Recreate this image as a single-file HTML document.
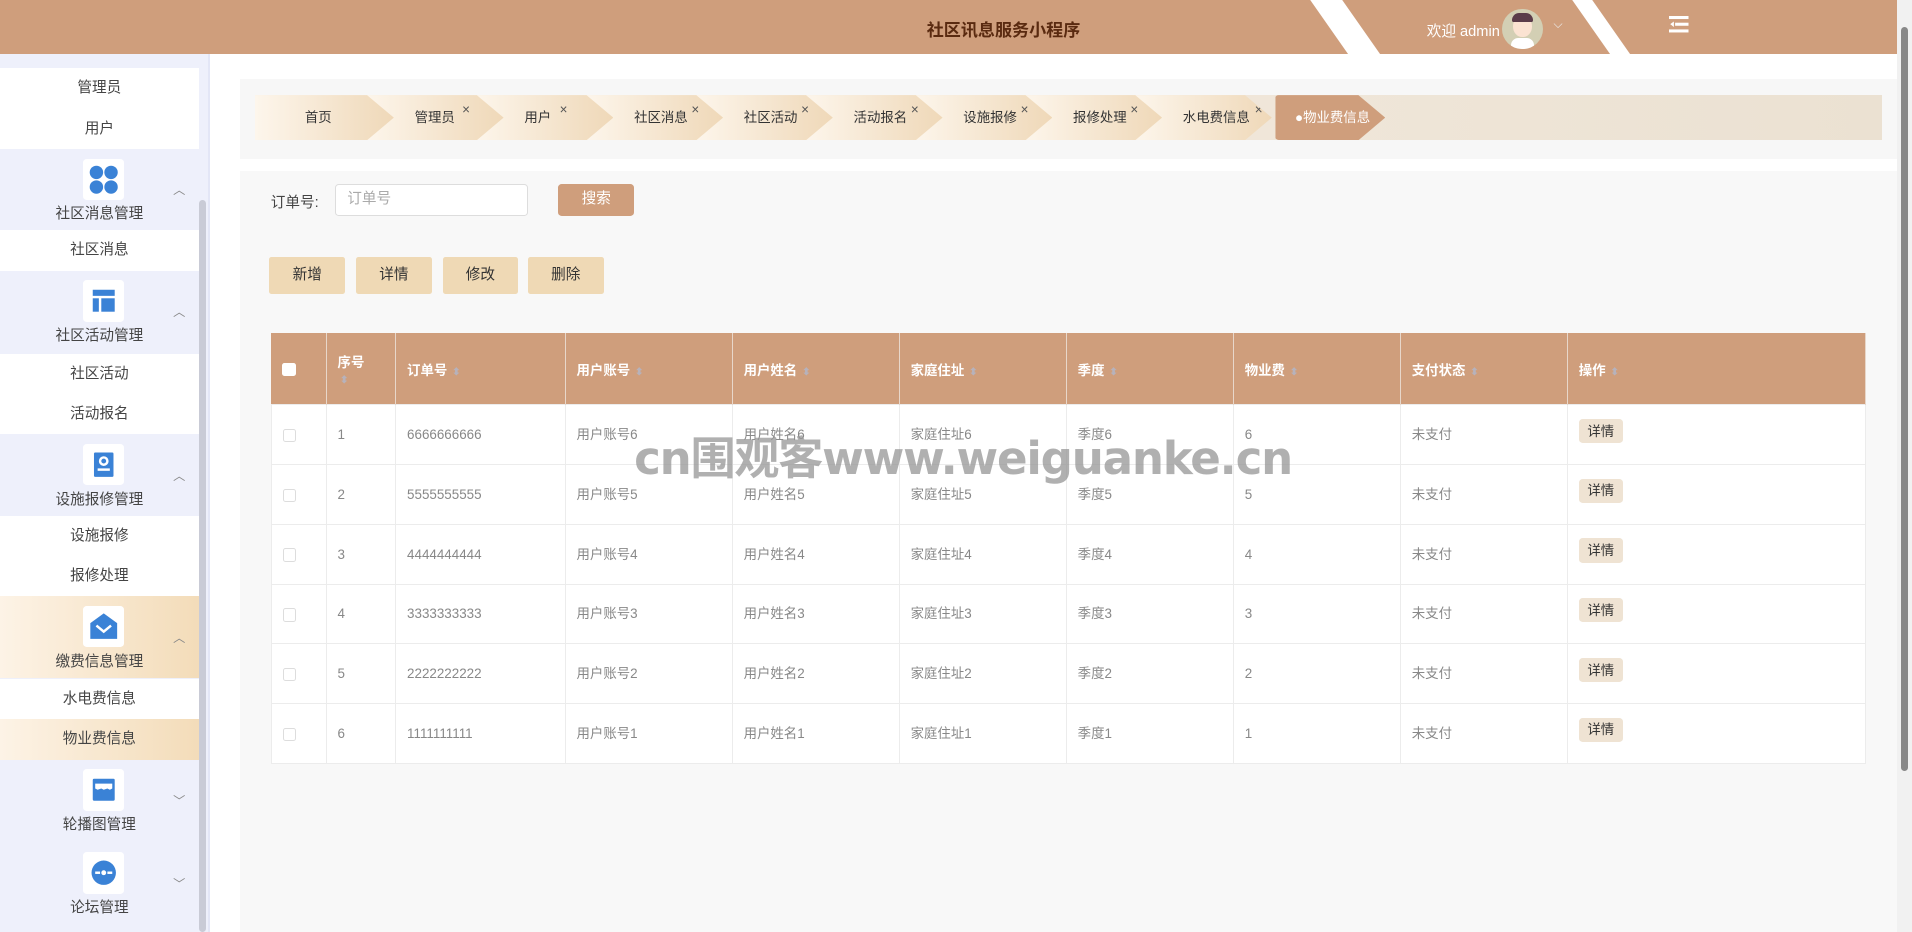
<!DOCTYPE html>
<html><head><meta charset="utf-8"><style>
*{margin:0;padding:0;box-sizing:border-box}
html,body{width:1912px;height:932px;overflow:hidden;background:#fff}
body{font-family:"Liberation Sans","Noto Sans CJK SC",sans-serif;}
#root{zoom:1.2194;width:1568px;height:764px;position:relative;overflow:hidden;font-size:12px;color:#333}
.hdr{position:absolute;left:0;top:0;width:1556px;height:44px;background:#cf9e7c;overflow:hidden}
.hdr .t{position:absolute;left:760px;top:13px;font-size:14px;font-weight:bold;color:#5a2a10}
.stripe{position:absolute;top:0;height:44px;background:#fff;transform:skewX(35deg)}
.sb{position:absolute;left:0;top:44px;width:172px;height:720px;background:#eef0fb;border-right:2px solid #e3e6f6}
.sbs{position:absolute;left:163px;top:120px;width:6px;height:600px;background:#c9cbd6;border-radius:3px}
.it{position:absolute;left:0;width:163px;height:33px;line-height:33px;text-align:center;background:#fff;color:#444;font-size:12px}
.grp{position:absolute;left:0;width:163px;height:67px;text-align:center;color:#444}
.grp .ic{position:absolute;left:68px;top:8px;width:34px;height:34px;background:#fff;border-radius:3px}
.grp .lb{position:absolute;left:0;width:163px;top:44px;font-size:12px}
.grp .ch{position:absolute;left:142px;top:26px;font-size:10px;color:#888}
.act{background:linear-gradient(90deg,#fdf3e6,#f3dcb9)}
.bc{position:absolute;left:197px;top:65px;width:1359px;height:65px;background:#f7f7f7}
.tabs{position:absolute;left:209px;top:78px;width:1334px;height:37px;background:linear-gradient(90deg,#f7efe4,#ebe1d2)}
.tab{position:absolute;top:0;height:37px;width:114px;clip-path:polygon(0 0,92px 0,114px 50%,92px 100%,0 100%);background:linear-gradient(90deg,#fdf6ec,#efd8b8);font-size:11px;color:#333;line-height:37px}
.tab .x{position:absolute;top:-7px;font-size:11px;color:#555}
.main{position:absolute;left:197px;top:140px;width:1359px;height:624px;background:#f8f8f8}
.btn{position:absolute;top:211px;width:62px;height:30px;background:#efd9b5;border-radius:2px;text-align:center;line-height:30px;font-size:12px;color:#333}
table{position:absolute;left:222px;top:273px;width:1308px;border-collapse:collapse;background:#fff}
th{background:#cf9e7c;color:#fff;height:59px;text-align:left;padding-left:9px;font-size:11px;font-weight:bold;border-right:1px solid #e8d7ca;vertical-align:middle}
td{height:49px;border:1px solid #ececec;padding-left:9px;color:#888;font-size:11px;vertical-align:middle;line-height:14px}
.so{color:#b7b2bb;font-size:8px;margin-left:4px}
.cb{display:inline-block;width:11px;height:11px;border:1px solid #ddd;border-radius:2px;background:#fff;vertical-align:middle}
.db{display:inline-block;background:#efe3d3;color:#333;padding:3px 7px;border-radius:3px;font-size:11px;position:relative;top:-3px}
.wm{position:absolute;left:520px;top:346px;font-size:37px;font-weight:bold;color:rgba(150,150,150,.75);letter-spacing:-1px;font-family:"DejaVu Sans","Noto Sans CJK SC",sans-serif}
.vs{position:absolute;left:1556px;top:0;width:12px;height:764px;background:#f1f1f1}
.vs div{position:absolute;left:3px;top:22px;width:6px;height:610px;background:#888;border-radius:3px}
</style></head><body><div id="root">
<div class="hdr">
<div class="t">社区讯息服务小程序</div>
<div class="stripe" style="left:1090px;width:26px"></div>
<div class="stripe" style="left:1305px;width:16px"></div>
<div style="position:absolute;left:1170px;top:16px;color:#fff;font-size:12px">欢迎 admin</div>
<div style="position:absolute;left:1232px;top:7px;width:33px;height:33px;border-radius:50%;background:#d3cfb4;overflow:hidden">
<div style="position:absolute;left:9px;top:6px;width:15px;height:17px;border-radius:50%;background:#fbe3d2"></div>
<div style="position:absolute;left:8px;top:4px;width:17px;height:7px;border-radius:8px 8px 2px 2px;background:#5b3c4a"></div>
<div style="position:absolute;left:7px;top:24px;width:19px;height:12px;border-radius:6px 6px 0 0;background:#fff"></div></div>
<div style="position:absolute;left:1274px;top:14px;color:#eee;font-size:10px">⌵</div>
<svg style="position:absolute;left:1369px;top:13px" width="16" height="14"><rect x="0" y="0" width="16" height="2.5" fill="#fff"/><rect x="5" y="5.5" width="11" height="2.5" fill="#fff"/><rect x="0" y="11" width="16" height="2.5" fill="#fff"/><path d="M4 4.5L1 6.7L4 9z" fill="#fff"/></svg>
</div>
<div class="sb">
<div class="it" style="top:12px">管理员</div>
<div class="it" style="top:45px">用户</div>
<div class="grp" style="top:78px"><div class="ic"><svg width="34" height="34"><circle cx="11" cy="11" r="5.5" fill="#3a82d6"/><circle cx="23" cy="11" r="5.5" fill="#3a82d6"/><circle cx="11" cy="23" r="5.5" fill="#3a82d6"/><circle cx="23" cy="23" r="5.5" fill="#3a82d6"/></svg></div><div class="lb">社区消息管理</div><div class="ch">︿</div></div>
<div class="it" style="top:145px">社区消息</div>
<div class="grp" style="top:178px"><div class="ic"><svg width="34" height="34"><rect x="8" y="8" width="18" height="5" fill="#3a82d6"/><rect x="8" y="15" width="5" height="11" fill="#3a82d6"/><rect x="15" y="15" width="11" height="11" fill="#3a82d6"/></svg></div><div class="lb">社区活动管理</div><div class="ch">︿</div></div>
<div class="it" style="top:246px">社区活动</div>
<div class="it" style="top:279px">活动报名</div>
<div class="grp" style="top:312px"><div class="ic"><svg width="34" height="34"><rect x="9" y="7" width="16" height="20" rx="1" fill="#3a82d6"/><circle cx="17" cy="14" r="3" fill="none" stroke="#fff" stroke-width="2"/><rect x="12" y="20" width="10" height="2" fill="#fff"/></svg></div><div class="lb">设施报修管理</div><div class="ch">︿</div></div>
<div class="it" style="top:379px">设施报修</div>
<div class="it" style="top:412px">报修处理</div>
<div class="grp act" style="top:445px"><div class="ic"><svg width="34" height="34"><path d="M17 6L28 14V27H6V14Z" fill="#3a82d6"/><path d="M11 16L17 21L23 16" fill="none" stroke="#fff" stroke-width="2"/></svg></div><div class="lb">缴费信息管理</div><div class="ch">︿</div></div>
<div class="it" style="top:513px">水电费信息</div>
<div class="it act" style="top:546px">物业费信息</div>
<div class="grp" style="top:579px"><div class="ic"><svg width="34" height="34"><rect x="8" y="8" width="18" height="18" rx="1" fill="#3a82d6"/><path d="M10 12h14v4l-2 1-2-1-3 1-2-1-3 1-2-1z" fill="#fff"/></svg></div><div class="lb">轮播图管理</div><div class="ch">﹀</div></div>
<div class="grp" style="top:647px"><div class="ic"><svg width="34" height="34"><circle cx="17" cy="17" r="10" fill="#3a82d6"/><rect x="10" y="16" width="4" height="2" fill="#fff"/><circle cx="17" cy="17" r="2" fill="#fff"/><rect x="20" y="16" width="4" height="2" fill="#fff"/></svg></div><div class="lb">论坛管理</div><div class="ch">﹀</div></div>
<div class="sbs"></div>
</div>
<div class="bc"></div>
<div class="tabs">
<div class="tab" style="left:0;z-index:20"><span style="position:absolute;left:41px">首页</span></div>
<div class="tab" style="left:90px;z-index:19"><span style="position:absolute;left:41px">管理员</span><span class="x" style="left:80px">×</span></div>
<div class="tab" style="left:180px;z-index:18"><span style="position:absolute;left:41px">用户</span><span class="x" style="left:70px">×</span></div>
<div class="tab" style="left:270px;z-index:17"><span style="position:absolute;left:41px">社区消息</span><span class="x" style="left:88px">×</span></div>
<div class="tab" style="left:360px;z-index:16"><span style="position:absolute;left:41px">社区活动</span><span class="x" style="left:88px">×</span></div>
<div class="tab" style="left:450px;z-index:15"><span style="position:absolute;left:41px">活动报名</span><span class="x" style="left:88px">×</span></div>
<div class="tab" style="left:540px;z-index:14"><span style="position:absolute;left:41px">设施报修</span><span class="x" style="left:88px">×</span></div>
<div class="tab" style="left:630px;z-index:13"><span style="position:absolute;left:41px">报修处理</span><span class="x" style="left:88px">×</span></div>
<div class="tab" style="left:720px;z-index:12"><span style="position:absolute;left:41px">水电费信息</span><span class="x" style="left:100px">×</span></div>
<div class="tab" style="left:837px;z-index:11;width:90px;clip-path:polygon(0 0,68px 0,90px 50%,68px 100%,0 100%);background:#cf9e7c;color:#fff;border-radius:3px"><span style="position:absolute;left:16px">●物业费信息</span></div>
</div>
<div class="main"></div>
<div style="position:absolute;left:222px;top:157px;font-size:12px;color:#444">订单号:</div>
<div style="position:absolute;left:275px;top:151px;width:158px;height:26px;background:#fff;border:1px solid #ddd;border-radius:3px;padding-left:9px;line-height:24px;color:#aaa;font-size:12px">订单号</div>
<div style="position:absolute;left:458px;top:151px;width:62px;height:26px;background:#cf9e7c;border-radius:3px;color:#fff;text-align:center;line-height:26px;font-size:12px">搜索</div>
<div class="btn" style="left:221px">新增</div>
<div class="btn" style="left:292px">详情</div>
<div class="btn" style="left:363px">修改</div>
<div class="btn" style="left:433px">删除</div>
<table>
<tr><th style="width:45px"><span class="cb" style="border-color:#fff"></span></th><th style="width:57px">序号<br><span class="so" style="margin-left:2px">⬍</span></th><th style="width:139px">订单号<span class="so">⬍</span></th><th style="width:137px">用户账号<span class="so">⬍</span></th><th style="width:137px">用户姓名<span class="so">⬍</span></th><th style="width:137px">家庭住址<span class="so">⬍</span></th><th style="width:137px">季度<span class="so">⬍</span></th><th style="width:137px">物业费<span class="so">⬍</span></th><th style="width:137px">支付状态<span class="so">⬍</span></th><th>操作<span class="so">⬍</span></th></tr>
<tr><td><span class="cb"></span></td><td>1</td><td>6666666666</td><td>用户账号6</td><td>用户姓名6</td><td>家庭住址6</td><td>季度6</td><td>6</td><td>未支付</td><td><span class="db">详情</span></td></tr>
<tr><td><span class="cb"></span></td><td>2</td><td>5555555555</td><td>用户账号5</td><td>用户姓名5</td><td>家庭住址5</td><td>季度5</td><td>5</td><td>未支付</td><td><span class="db">详情</span></td></tr>
<tr><td><span class="cb"></span></td><td>3</td><td>4444444444</td><td>用户账号4</td><td>用户姓名4</td><td>家庭住址4</td><td>季度4</td><td>4</td><td>未支付</td><td><span class="db">详情</span></td></tr>
<tr><td><span class="cb"></span></td><td>4</td><td>3333333333</td><td>用户账号3</td><td>用户姓名3</td><td>家庭住址3</td><td>季度3</td><td>3</td><td>未支付</td><td><span class="db">详情</span></td></tr>
<tr><td><span class="cb"></span></td><td>5</td><td>2222222222</td><td>用户账号2</td><td>用户姓名2</td><td>家庭住址2</td><td>季度2</td><td>2</td><td>未支付</td><td><span class="db">详情</span></td></tr>
<tr><td><span class="cb"></span></td><td>6</td><td>1111111111</td><td>用户账号1</td><td>用户姓名1</td><td>家庭住址1</td><td>季度1</td><td>1</td><td>未支付</td><td><span class="db">详情</span></td></tr>
</table>
<div class="wm">cn围观客www.weiguanke.cn</div>
<div class="vs"><div></div></div>
</div></body></html>
